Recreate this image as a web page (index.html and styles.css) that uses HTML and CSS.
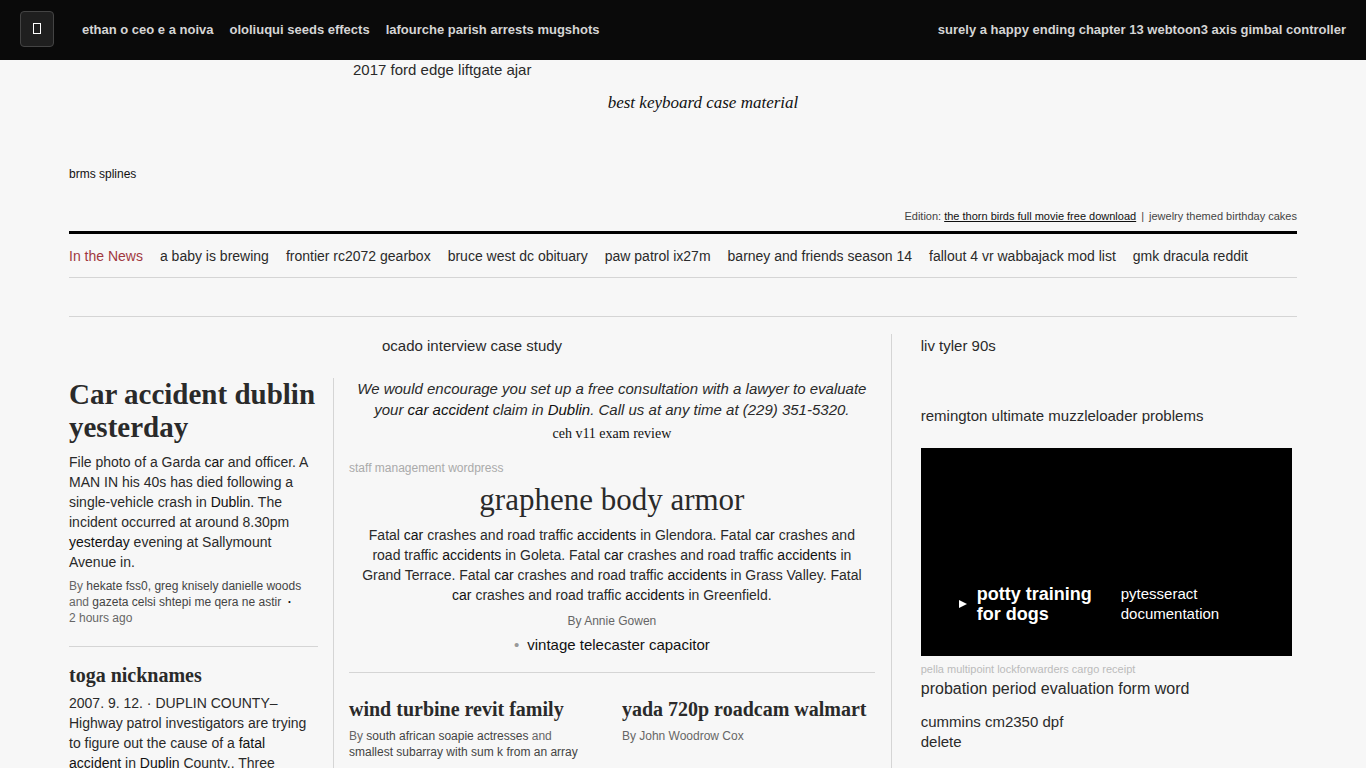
FILE: index.html
```html
<!DOCTYPE html>
<html lang="en">
<head>
  <meta charset="UTF-8">
  <meta name="viewport" content="width=device-width, initial-scale=1">
  <title>Car accident dublin yesterday</title>
  <link rel="stylesheet" href="styles.css">
</head>
<body>
  <header class="topbar">
    <button class="menu-btn" type="button" aria-label="Menu">
      <svg width="10" height="13" viewBox="0 0 10 13"><rect x="1.5" y="0.5" width="7" height="10" fill="none" stroke="#fff"/></svg>
    </button>
    <nav class="topbar-nav">
      <a href="#">ethan o ceo e a noiva</a>
      <a href="#">ololiuqui seeds effects</a>
      <a href="#">lafourche parish arrests mugshots</a>
    </nav>
    <div class="topbar-user"><a href="#">surely a happy ending chapter 13 webtoon</a><a href="#">3 axis gimbal controller</a></div>
  </header>

  <div class="container">
    <div class="masthead">
      <a class="leader" href="#">2017 ford edge liftgate ajar</a>
      <p class="slogan">best keyboard case material</p>
      <p class="date">brms splines</p>
      <p class="edition">Edition: <a class="current" href="#">the thorn birds full movie free download</a><span class="sep">|</span><a href="#">jewelry themed birthday cakes</a></p>
    </div>

    <nav class="news-bar">
      <span class="news-label">In the News</span>
      <a href="#">a baby is brewing</a>
      <a href="#">frontier rc2072 gearbox</a>
      <a href="#">bruce west dc obituary</a>
      <a href="#">paw patrol ix27m</a>
      <a href="#">barney and friends season 14</a>
      <a href="#">fallout 4 vr wabbajack mod list</a>
      <a href="#">gmk dracula reddit</a>
    </nav>
    <div class="spacer"></div>

    <div class="page-grid">
      <main class="main">
        <p class="main-label">ocado interview case study</p>
        <div class="stories">
          <div class="left-col">
            <article class="story">
              <h1>Car accident dublin yesterday</h1>
              <p class="blurb">File photo of a Garda <b>car</b> and officer. A<br>MAN IN his 40s has died following a<br>single-vehicle crash in <b>Dublin</b>. The<br>incident occurred at around 8.30pm<br><b>yesterday</b> evening at Sallymount<br>Avenue in.</p>
              <p class="byline">By <a href="#">hekate fss0, greg knisely danielle woods</a><br>and <a href="#">gazeta celsi shtepi me qera ne astir</a> &nbsp;<span class="dot">·</span><br>2 hours ago</p>
            </article>
            <article class="story">
              <h2>toga nicknames</h2>
              <p class="blurb">2007. 9. 12. · DUPLIN COUNTY–<br>Highway patrol investigators are trying<br>to figure out the cause of a <b>fatal</b><br><b>accident</b> in <b>Duplin</b> County.. Three</p>
            </article>
          </div>

          <div class="center-col">
            <section class="lead">
              <p class="quote">We would encourage you set up a free consultation with a lawyer to evaluate your <b>car accident</b> claim in <b>Dublin</b>. Call us at any time at (229) 351-5320.</p>
              <p class="review">ceh v11 exam review</p>
              <p class="kicker">staff management wordpress</p>
              <h2 class="lead-title">graphene body armor</h2>
              <p class="blurb">Fatal <b>car</b> crashes and road traffic <b>accidents</b> in Glendora. Fatal <b>car</b> crashes and<br>road traffic <b>accidents</b> in Goleta. Fatal <b>car</b> crashes and road traffic <b>accidents</b> in<br>Grand Terrace. Fatal <b>car</b> crashes and road traffic <b>accidents</b> in Grass Valley. Fatal<br><b>car</b> crashes and road traffic <b>accidents</b> in Greenfield.</p>
              <p class="byline">By Annie Gowen</p>
              <ul class="related">
                <li><a href="#">vintage telecaster capacitor</a></li>
              </ul>
            </section>
            <div class="pair">
              <article>
                <h2>wind turbine revit family</h2>
                <p class="byline">By <a href="#">south african soapie actresses</a> and<br><a href="#">smallest subarray with sum k from an array</a></p>
              </article>
              <article>
                <h2>yada 720p roadcam walmart</h2>
                <p class="byline">By John Woodrow Cox</p>
              </article>
            </div>
          </div>
        </div>
      </main>

      <aside class="sidebar">
        <p class="side-label">liv tyler 90s</p>
        <p class="side-title">remington ultimate muzzleloader problems</p>
        <div class="video">
          <svg class="play" width="8" height="8" viewBox="0 0 8 8"><path d="M0 0L8 4L0 8Z" fill="#fff"/></svg>
          <a class="video-title" href="#">potty training for dogs</a>
          <a class="video-sub" href="#">pytesseract documentation</a>
        </div>
        <p class="credit">pella multipoint lockforwarders cargo receipt</p>
        <p class="side-headline">probation period evaluation form word</p>
        <p class="side-item">cummins cm2350 dpf<br>delete</p>
      </aside>
    </div>
  </div>
</body>
</html>
```
FILE: styles.css
```css
* {
  box-sizing: border-box;
}
body {
  margin: 0;
  height: 100vh;
  overflow: hidden;
  background: #f7f7f7;
  color: #2a2a2a;
  font-family: "Liberation Sans", Arial, sans-serif;
  font-size: 15px;
  line-height: 20px;
}
h1, h2, p, ul {
  margin: 0;
  padding: 0;
}
a {
  color: inherit;
  text-decoration: none;
}
b {
  font-weight: normal;
  color: #111;
}

/* top bar */
.topbar {
  display: flex;
  align-items: center;
  height: 60px;
  padding: 0 20px;
  background: #0a0a0a;
  color: #d5d5d5;
  font-size: 13px;
  font-weight: bold;
}
.menu-btn {
  display: flex;
  align-items: center;
  justify-content: center;
  width: 34px;
  height: 36px;
  margin: 0 28px 2px 0;
  padding: 0;
  background: #1f1f1f;
  border: 1px solid #444;
  border-radius: 4px;
}
.topbar-nav {
  display: flex;
  gap: 16px;
}
.topbar-user {
  margin-left: auto;
}

.container {
  padding: 0 69px;
}

/* masthead */
.masthead {
  display: flex;
  flex-direction: column;
  padding-bottom: 7px;
  border-bottom: 3px solid #000;
}
.leader {
  margin: 0 0 13px 284px;
}
.slogan {
  margin: 0 0 53px 40px;
  text-align: center;
  font-family: "Liberation Serif", serif;
  font-size: 17px;
  font-style: italic;
  color: #111;
}
.date {
  margin-bottom: 26px;
  font-size: 12px;
  line-height: 16px;
  color: #111;
}
.edition {
  text-align: right;
  font-size: 11px;
  line-height: 16px;
  color: #444;
}
.edition .current {
  color: #111;
  text-decoration: underline;
}
.edition .sep {
  margin: 0 5px;
}

/* in the news */
.news-bar {
  display: flex;
  gap: 17px;
  padding: 12px 0 11px;
  border-bottom: 1px solid #d5d5d5;
  font-size: 14px;
  white-space: nowrap;
}
.news-label {
  color: #a0383f;
}
.spacer {
  height: 39px;
  border-bottom: 1px solid #d5d5d5;
}

/* columns */
.page-grid {
  display: grid;
  grid-template-columns: 67% 33%;
  margin-top: 17px;
}
.main {
  padding: 2px 16px 0 0;
  border-right: 1px solid #d5d5d5;
}
.main-label {
  margin: 0 0 22px 313px;
}
.stories {
  display: flex;
}
.left-col {
  flex: 0 0 265px;
  padding-right: 15px;
  border-right: 1px solid #d5d5d5;
}
.center-col {
  flex: 1;
  min-width: 0;
  padding-left: 15px;
}

h1, h2 {
  font-family: "Liberation Serif", serif;
  font-size: 20px;
  line-height: 20px;
}
h1 {
  margin-bottom: 8px;
  font-size: 29px;
  line-height: 33px;
}
.blurb {
  font-size: 14px;
  white-space: nowrap;
}
.byline {
  margin-top: 6px;
  font-size: 12px;
  line-height: 16px;
  color: #666;
  white-space: nowrap;
}
.byline a {
  color: #444;
}
.byline .dot {
  font-weight: bold;
  color: #111;
}
.story {
  padding-bottom: 20px;
}
.story + .story {
  padding-top: 18px;
  border-top: 1px solid #d5d5d5;
}
.story h2 {
  margin-bottom: 8px;
}

/* lead story */
.lead {
  padding-bottom: 17px;
  border-bottom: 1px solid #d5d5d5;
  text-align: center;
}
.quote {
  line-height: 21px;
  font-style: italic;
}
.review {
  margin: 4px 0 16px;
  font-family: "Liberation Serif", serif;
  font-size: 14px;
  color: #111;
}
.kicker {
  text-align: left;
  font-size: 12px;
  line-height: 16px;
  color: #aaa;
}
.lead-title {
  margin: 7px 0 8px;
  font-size: 31px;
  font-weight: normal;
  line-height: 34px;
}
.lead .byline {
  margin-top: 8px;
}
.related {
  display: flex;
  justify-content: center;
  margin-top: 6px;
  list-style: none;
  color: #111;
}
.related li::before {
  content: "•";
  margin-right: 8px;
  color: #999;
}
.pair {
  display: grid;
  grid-template-columns: 1fr 1fr;
  gap: 20px;
  padding-top: 26px;
}
.pair .byline {
  margin-top: 9px;
}

/* sidebar */
.sidebar {
  padding: 2px 5px 0 29px;
}
.side-label {
  margin-bottom: 50px;
}
.video {
  display: flex;
  align-items: center;
  height: 208px;
  margin-top: 22px;
  padding: 104px 38px 0;
  background: #000;
  color: #fff;
}
.play {
  flex: none;
  margin-right: 10px;
}
.video-title {
  width: 124px;
  margin-right: 20px;
  font-size: 18px;
  font-weight: bold;
}
.video-sub {
  flex: 1;
}
.credit {
  margin: 5px 0 2px;
  font-size: 11px;
  line-height: 16px;
  color: #bbb;
}
.side-headline {
  margin-bottom: 13px;
  font-size: 16px;
}
```
